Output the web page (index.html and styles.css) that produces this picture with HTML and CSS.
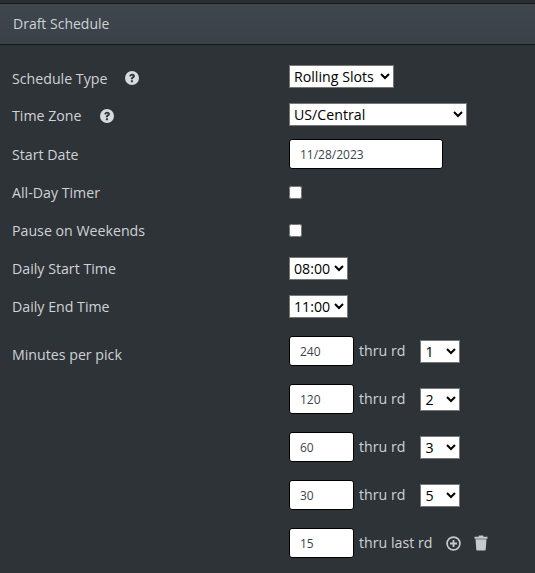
FILE: index.html
```
<!DOCTYPE html>
<html lang="en">
<head>
<meta charset="utf-8">
<title>Draft Schedule</title>
<link rel="stylesheet" href="styles.css">
</head>
<body>
<svg class="sprites" width="0" height="0" aria-hidden="true">
  <symbol id="help" viewBox="0 0 14 14">
    <circle cx="7" cy="7" r="7" fill="currentColor"/>
    <path d="M4.3 5.300C4.400 3.700 5.600 2.800 7.100 2.800c1.600 0 2.800.9 2.800 2.300 0 1.100-.7 1.600-1.300 2-.5.3-.7.5-.7.9v.3H5.900v-.5c0-1 .5-1.500 1.100-1.900.5-.3.8-.5.800-.8 0-.4-.3-.6-.8-.6s-.9.3-1 .9z" fill="#2e3338"/>
    <rect x="5.900" y="9.200" width="2" height="2" rx=".3" fill="#2e3338"/>
  </symbol>
</svg>
<main class="panel">
  <div class="topbar"></div>
  <h1 class="panel-head">Draft Schedule</h1>
  <div class="form">
    <div class="row raised">
      <div class="label"><span>Schedule Type</span><svg class="help"><use href="#help"/></svg></div>
      <select class="sel type"><option>Rolling Slots</option></select>
    </div>
    <div class="row raised">
      <div class="label"><span>Time Zone</span><svg class="help"><use href="#help"/></svg></div>
      <select class="sel tz"><option>US/Central</option></select>
    </div>
    <div class="row">
      <div class="label">Start Date</div>
      <input class="inp date" type="text" value="11/28/2023">
    </div>
    <div class="row">
      <div class="label">All-Day Timer</div>
      <input class="chk" type="checkbox">
    </div>
    <div class="row">
      <div class="label">Pause on Weekends</div>
      <input class="chk" type="checkbox">
    </div>
    <div class="row">
      <div class="label">Daily Start Time</div>
      <select class="sel time"><option>08:00</option></select>
    </div>
    <div class="row">
      <div class="label">Daily End Time</div>
      <select class="sel time"><option>11:00</option></select>
    </div>
    <div class="row picks">
      <div class="label">Minutes per pick</div>
      <div class="pick-list">
        <div class="pick"><input class="inp num" type="text" value="240"><span class="thru">thru rd</span><select class="sel rd"><option>1</option></select></div>
        <div class="pick"><input class="inp num" type="text" value="120"><span class="thru">thru rd</span><select class="sel rd"><option>2</option></select></div>
        <div class="pick"><input class="inp num" type="text" value="60"><span class="thru">thru rd</span><select class="sel rd"><option>3</option></select></div>
        <div class="pick"><input class="inp num" type="text" value="30"><span class="thru">thru rd</span><select class="sel rd"><option>5</option></select></div>
        <div class="pick"><input class="inp num" type="text" value="15"><span class="thru">thru last rd</span>
          <svg class="act add" viewBox="0 0 15 15"><circle cx="7.500" cy="7.500" r="6.400" fill="none" stroke="currentColor" stroke-width="1.700"/><path d="M7.500 4v7M4 7.500h7" stroke="currentColor" stroke-width="1.800"/></svg>
          <svg class="act del" viewBox="0 0 14 16"><path d="M5 .5h4l.6 1.200H13.500v2H.5v-2h3.900zM1.500 4.300h11l-.8 10.400a1 1 0 0 1-1 .8H3.300a1 1 0 0 1-1-.8z" fill="currentColor"/></svg>
        </div>
      </div>
    </div>
  </div>
</main>
</body>
</html>
```
FILE: styles.css
```
* { box-sizing: border-box; }
html, body { margin: 0; height: 100%; }
body {
  background: #2e3338;
  color: #ced2d6;
  font-family: "Open Sans", sans-serif;
  font-size: 14.2px;
  overflow: hidden;
}
.sprites { position: absolute; }
.topbar {
  height: 4px;
  background: #2a2e33;
  border-bottom: 1px solid #16191c;
}
.panel-head {
  margin: 0;
  height: 41px;
  padding: 0 13px 2px;
  display: flex;
  align-items: center;
  font-size: 14px;
  font-weight: 400;
  color: #ced2d6;
  background: linear-gradient(#3f464e, #3a4149);
  border-bottom: 1px solid #16191c;
}
.form { padding: 14px 12px 0; }
.row {
  display: grid;
  grid-template-columns: 277px auto;
  justify-content: start;
  align-items: center;
  height: 38px;
}
.row.raised .sel { margin-bottom: 4px; }
.row.raised + .row.raised .label { margin-bottom: 1px; }
.row.picks { height: auto; align-items: start; margin-top: 11px; }
.picks .label { padding-top: 9px; }
.label { display: flex; align-items: center; }
.help { width: 14px; height: 14px; margin-left: 18px; color: #d8dbde; }
select.sel {
  justify-self: start;
  height: 23px;
  font-family: "Open Sans", sans-serif;
  font-size: 14.2px;
  color: #000;
  background: #fff;
  border: 1px solid #767676;
  border-radius: 0;
  padding: 0;
}
.type { width: 105px; }
.tz { width: 178px; }
.time { width: 59px; }
.rd { width: 40px; margin-left: 15px; }
.inp {
  height: 30px;
  background: #fff;
  border: 1px solid #000;
  border-radius: 3px;
  color: #3d444b;
  font-family: "Open Sans", sans-serif;
  font-size: 12px;
  padding: 0 10px;
  outline: none;
}
.date { width: 154px; }
.num { width: 65px; }
.chk { width: 13px; height: 13px; margin: 0; justify-self: start; }
.pick-list { display: flex; flex-direction: column; gap: 18px; }
.pick { display: flex; align-items: center; height: 30px; }
.thru { margin: 0 0 2px 5px; }
.act { color: #c6cacd; flex: none; }
.add { width: 15px; height: 15px; margin-left: 14px; }
.del { width: 14px; height: 16px; margin-left: 13px; }
```
